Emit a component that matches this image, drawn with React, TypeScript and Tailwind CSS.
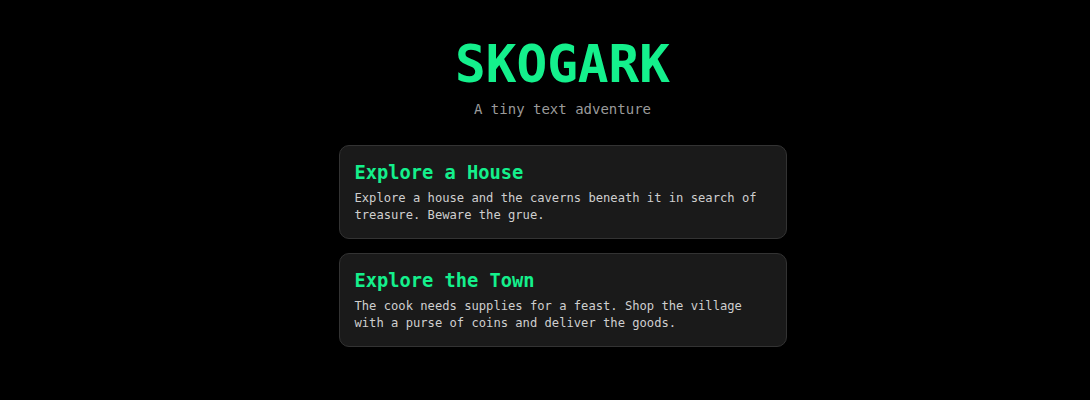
import React from "react";

const games = [
  {
    title: "Explore a House",
    desc: "Explore a house and the caverns beneath it in search of treasure. Beware the grue.",
  },
  {
    title: "Explore the Town",
    desc: "The cook needs supplies for a feast. Shop the village with a purse of coins and deliver the goods.",
  },
];

export default function App() {
  return (
    <div
      className="min-h-[400px] w-full bg-black pt-[34px] pl-[35px]"
      style={{ fontFamily: '"DejaVu Sans Mono", "Liberation Mono", monospace' }}
    >
      <div className="mx-auto flex w-[448px] flex-col items-center">
        <h1 className="text-[51px] font-bold leading-[61px] text-[#14f08c]">SKOGARK</h1>
        <p className="mt-[4px] text-[14px] leading-[20px] text-[#9a9a9a]">A tiny text adventure</p>
        <div className="mt-[26px] flex w-full flex-col gap-[14px]">
          {games.map((g) => (
            <div
              key={g.title}
              className="rounded-[10px] border border-[#333333] bg-[#1a1a1a] pl-[15px] pr-[16px] pt-[16px] pb-[14px]"
            >
              <h2 className="text-[18.7px] font-bold leading-[22px] text-[#14f08c]">{g.title}</h2>
              <p className="mt-[6px] text-[12.15px] leading-[17px] text-[#cfcfcf]">{g.desc}</p>
            </div>
          ))}
        </div>
      </div>
    </div>
  );
}
